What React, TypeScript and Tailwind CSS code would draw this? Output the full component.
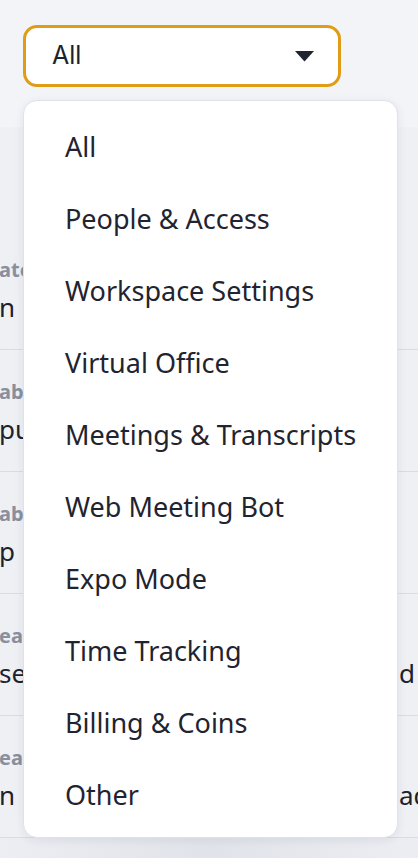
const OPTIONS = [
  "All",
  "People & Access",
  "Workspace Settings",
  "Virtual Office",
  "Meetings & Transcripts",
  "Web Meeting Bot",
  "Expo Mode",
  "Time Tracking",
  "Billing & Coins",
  "Other",
];

// rows of the activity table behind the open menu (only the edges show)
const ROWS = [
  { label: "ate", value: "n '", right: "" },
  { label: "abl", value: "pu", right: "" },
  { label: "ab", value: "p", right: "" },
  { label: "ea", value: "se", right: "d" },
  { label: "ea", value: "n", right: "ad" },
];

export default function App() {
  return (
    <div
      className="relative w-[418px] h-[858px] overflow-hidden bg-[#f3f4f8]"
      style={{ fontFamily: "'Noto Sans', sans-serif" }}
    >
      <div className="h-[127px] pt-[25px] pl-[23px]">
        <button
          type="button"
          className="flex items-center justify-between w-[318px] h-[62px] rounded-[14px] border-[3px] border-[#e09c15] bg-white pl-[26px] pr-[24px]"
        >
          <span className="text-[25px] text-[#1d222c]" style={{ fontFamily: "Inter, sans-serif" }}>
            All
          </span>
          <svg width="19" height="11" viewBox="0 0 19 11">
            <path d="M0 0 H19 L9.5 10.5 Z" fill="#1f2430" />
          </svg>
        </button>
      </div>

      <div className="flex flex-col bg-[#eef0f4] h-[731px] pt-[101px]">
        {ROWS.map((r, i) => (
          <div key={i} className="flex justify-between h-[122px] shrink-0 border-b border-[#d9dce3] overflow-hidden">
            <div className="flex flex-col gap-[14px] pt-[32px] -ml-px leading-none">
              <span className="text-[20px] font-bold text-[#8a8f9d]">{r.label}</span>
              <span className="text-[26px] text-[#1d222c]">{r.value}</span>
            </div>
            <span className="pt-[66px] w-[19px] text-[26px] leading-none text-[#1d222c] whitespace-nowrap">
              {r.right}
            </span>
          </div>
        ))}
        <div className="h-[20px] shrink-0 bg-gradient-to-r from-[#eceef3] via-[#e1e3ea] to-[#eceef3]" />
      </div>

      <ul className="absolute left-[23px] top-[100px] w-[375px] h-[738px] rounded-[14px] border border-[#dfe2e9] bg-white pt-[10px] shadow-[0_2px_10px_rgba(30,40,70,0.08)]">
        {OPTIONS.map((o) => (
          <li key={o} className="flex items-center h-[72px] pl-[41px] text-[27px] text-[#1f2430]">
            {o}
          </li>
        ))}
      </ul>
    </div>
  );
}
